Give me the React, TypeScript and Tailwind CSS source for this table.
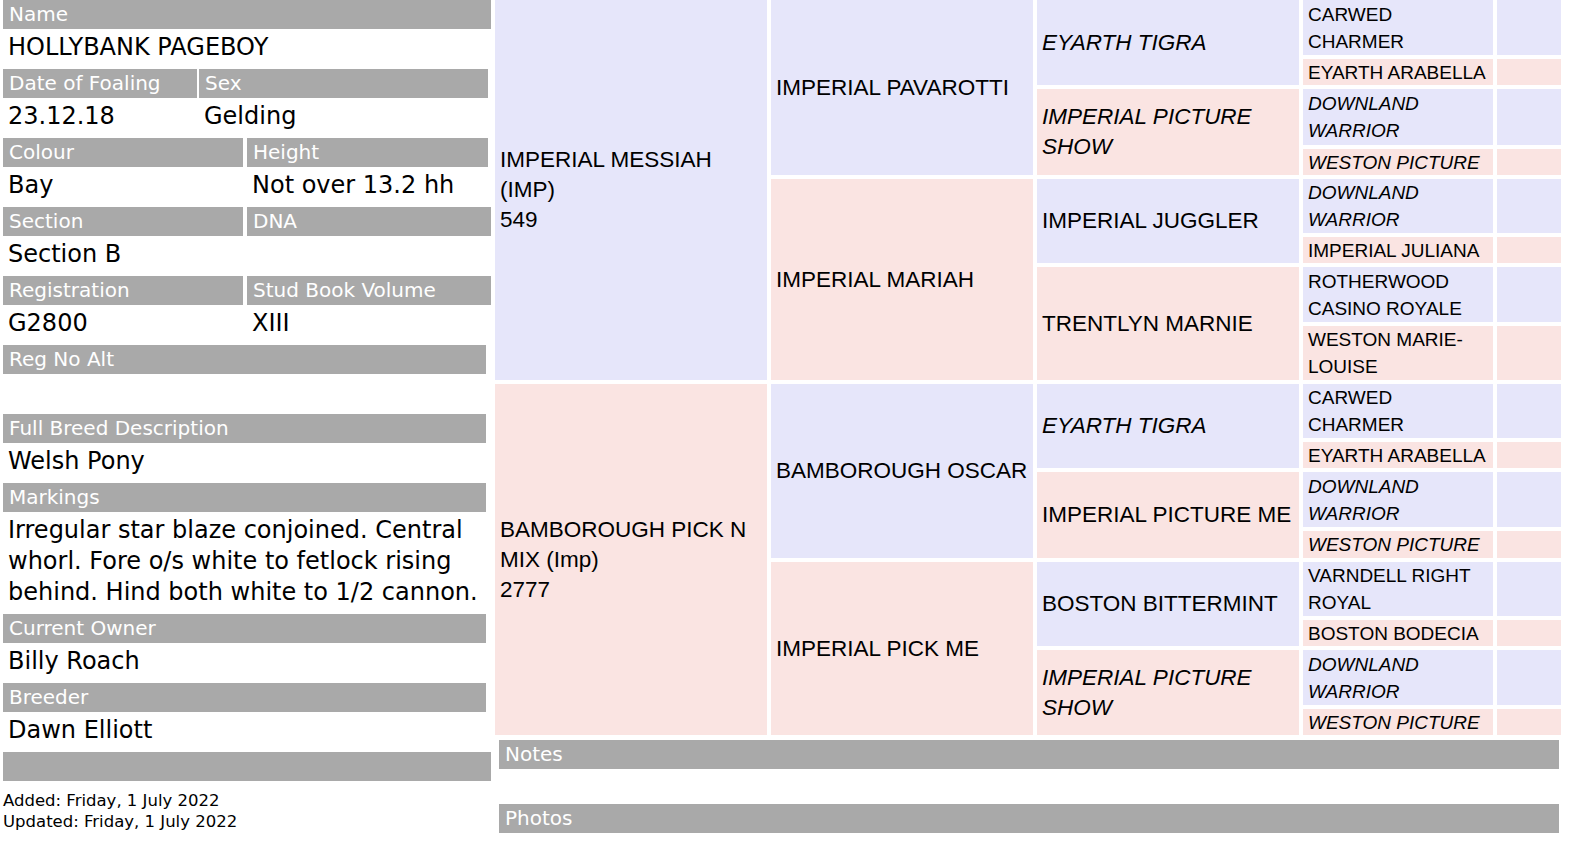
import React from 'react';

const BLUE = 'bg-[#e6e6fa]';
const PINK = 'bg-[#fae4e2]';

const Bar: React.FC<{ label?: string; className?: string }> = ({ label = '', className = '' }) => (
  <div
    className={`h-[29px] bg-[#a9a9a9] text-white text-[20px] leading-[29px] pl-[6px] whitespace-nowrap overflow-hidden ${className}`}
  >
    {label || '\u00a0'}
  </div>
);

const Value: React.FC<{ children?: React.ReactNode; className?: string }> = ({ children, className = '' }) => (
  <div className={`py-[3px] pl-[5px] leading-[31px] text-[24px] text-black whitespace-nowrap ${className}`}>
    {children ?? '\u00a0'}
  </div>
);

interface Cell {
  name: string[];
  italic?: boolean;
  pink?: boolean;
  gen: 1 | 2 | 3 | 4 | 5;
  span: number;
}

// table order, row by row (like the original rowspan table)
const cells: Cell[] = [
  { gen: 1, span: 8, name: ['IMPERIAL MESSIAH', '(IMP)', '549'] },
  { gen: 2, span: 4, name: ['IMPERIAL PAVAROTTI'] },
  { gen: 3, span: 2, name: ['EYARTH TIGRA'], italic: true },
  { gen: 4, span: 1, name: ['CARWED', 'CHARMER'] },
  { gen: 5, span: 1, name: [] },
  { gen: 4, span: 1, name: ['EYARTH ARABELLA'], pink: true },
  { gen: 5, span: 1, name: [], pink: true },
  { gen: 3, span: 2, name: ['IMPERIAL PICTURE', 'SHOW'], italic: true, pink: true },
  { gen: 4, span: 1, name: ['DOWNLAND', 'WARRIOR'], italic: true },
  { gen: 5, span: 1, name: [] },
  { gen: 4, span: 1, name: ['WESTON PICTURE'], italic: true, pink: true },
  { gen: 5, span: 1, name: [], pink: true },
  { gen: 2, span: 4, name: ['IMPERIAL MARIAH'], pink: true },
  { gen: 3, span: 2, name: ['IMPERIAL JUGGLER'] },
  { gen: 4, span: 1, name: ['DOWNLAND', 'WARRIOR'], italic: true },
  { gen: 5, span: 1, name: [] },
  { gen: 4, span: 1, name: ['IMPERIAL JULIANA'], pink: true },
  { gen: 5, span: 1, name: [], pink: true },
  { gen: 3, span: 2, name: ['TRENTLYN MARNIE'], pink: true },
  { gen: 4, span: 1, name: ['ROTHERWOOD', 'CASINO ROYALE'] },
  { gen: 5, span: 1, name: [] },
  { gen: 4, span: 1, name: ['WESTON MARIE-', 'LOUISE'], pink: true },
  { gen: 5, span: 1, name: [], pink: true },
  { gen: 1, span: 8, name: ['BAMBOROUGH PICK N', 'MIX (Imp)', '2777'], pink: true },
  { gen: 2, span: 4, name: ['BAMBOROUGH OSCAR'] },
  { gen: 3, span: 2, name: ['EYARTH TIGRA'], italic: true },
  { gen: 4, span: 1, name: ['CARWED', 'CHARMER'] },
  { gen: 5, span: 1, name: [] },
  { gen: 4, span: 1, name: ['EYARTH ARABELLA'], pink: true },
  { gen: 5, span: 1, name: [], pink: true },
  { gen: 3, span: 2, name: ['IMPERIAL PICTURE ME'], pink: true },
  { gen: 4, span: 1, name: ['DOWNLAND', 'WARRIOR'], italic: true },
  { gen: 5, span: 1, name: [] },
  { gen: 4, span: 1, name: ['WESTON PICTURE'], italic: true, pink: true },
  { gen: 5, span: 1, name: [], pink: true },
  { gen: 2, span: 4, name: ['IMPERIAL PICK ME'], pink: true },
  { gen: 3, span: 2, name: ['BOSTON BITTERMINT'] },
  { gen: 4, span: 1, name: ['VARNDELL RIGHT', 'ROYAL'] },
  { gen: 5, span: 1, name: [] },
  { gen: 4, span: 1, name: ['BOSTON BODECIA'], pink: true },
  { gen: 5, span: 1, name: [], pink: true },
  { gen: 3, span: 2, name: ['IMPERIAL PICTURE', 'SHOW'], italic: true, pink: true },
  { gen: 4, span: 1, name: ['DOWNLAND', 'WARRIOR'], italic: true },
  { gen: 5, span: 1, name: [] },
  { gen: 4, span: 1, name: ['WESTON PICTURE'], italic: true, pink: true },
  { gen: 5, span: 1, name: [], pink: true },
];

const colClass = {
  1: 'col-start-1',
  2: 'col-start-2',
  3: 'col-start-3',
  4: 'col-start-4',
  5: 'col-start-5',
};

const spanClass: Record<number, string> = {
  1: 'row-span-1',
  2: 'row-span-2',
  4: 'row-span-4',
  8: 'row-span-8',
};

const PedigreeCell: React.FC<{ cell: Cell }> = ({ cell }) => {
  const text =
    cell.gen === 4 ? 'text-[19px] leading-[27px]' : 'text-[22.5px] leading-[30px]';
  return (
    <div
      className={`${colClass[cell.gen]} ${spanClass[cell.span]} ${cell.pink ? PINK : BLUE} flex flex-col justify-center pl-[5px] whitespace-nowrap ${text} ${cell.italic ? 'italic' : ''} text-black`}
    >
      {cell.name.map((n, i) => (
        <div key={i}>{n}</div>
      ))}
    </div>
  );
};

export default function App() {
  return (
    <div className="flex bg-white w-[1572px] h-[842px] overflow-hidden font-['DejaVu_Sans',Verdana,sans-serif]">
      {/* left: horse details */}
      <div className="w-[488px] ml-[3px] shrink-0 flex flex-col">
        <Bar label="Name" />
        <Value className="mb-[3px]">HOLLYBANK PAGEBOY</Value>

        <div className="flex gap-[2px] w-[485px]">
          <Bar label="Date of Foaling" className="w-[194px]" />
          <Bar label="Sex" className="flex-1" />
        </div>
        <div className="flex mb-[3px]">
          <Value className="w-[196px]">23.12.18</Value>
          <Value>Gelding</Value>
        </div>

        <div className="flex gap-[4px] w-[485px]">
          <Bar label="Colour" className="w-[240px]" />
          <Bar label="Height" className="flex-1" />
        </div>
        <div className="flex mb-[3px]">
          <Value className="w-[244px]">Bay</Value>
          <Value>Not over 13.2 hh</Value>
        </div>

        <div className="flex gap-[4px]">
          <Bar label="Section" className="w-[240px]" />
          <Bar label="DNA" className="flex-1" />
        </div>
        <div className="flex mb-[3px]">
          <Value className="w-[244px]">Section B</Value>
          <Value />
        </div>

        <div className="flex gap-[4px]">
          <Bar label="Registration" className="w-[240px]" />
          <Bar label="Stud Book Volume" className="flex-1" />
        </div>
        <div className="flex mb-[3px]">
          <Value className="w-[244px]">G2800</Value>
          <Value>XIII</Value>
        </div>

        <Bar label="Reg No Alt" className="w-[483px]" />
        <Value className="mb-[3px]" />

        <Bar label="Full Breed Description" className="w-[483px]" />
        <Value className="mb-[3px]">Welsh Pony</Value>

        <Bar label="Markings" className="w-[483px]" />
        <Value className="mb-[3px]">
          <div>Irregular star blaze conjoined. Central</div>
          <div>whorl. Fore o/s white to fetlock rising</div>
          <div>behind. Hind both white to 1/2 cannon.</div>
        </Value>

        <Bar label="Current Owner" className="w-[483px]" />
        <Value className="mb-[3px]">Billy Roach</Value>

        <Bar label="Breeder" className="w-[483px]" />
        <Value className="mb-[3px]">Dawn Elliott</Value>

        <Bar />
        <div className="mt-[9px] text-[16.5px] leading-[21px] text-black">
          <div>Added: Friday, 1 July 2022</div>
          <div>Updated: Friday, 1 July 2022</div>
        </div>
      </div>

      {/* right: pedigree */}
      <div className="ml-[4px] flex flex-col">
        <div className="grid grid-cols-[272px_262px_262px_190px_64px] grid-rows-[55px_26px_56px_26px_54px_26px_55px_54px_54px_26px_55px_27px_54px_26px_55px_26px] gap-[4px] font-['Liberation_Sans',Arial,sans-serif]">
          {cells.map((c, i) => (
            <PedigreeCell key={i} cell={c} />
          ))}
        </div>
        <Bar label="Notes" className="ml-[4px] mt-[5px] w-[1060px]" />
        <div className="h-[35px]" />
        <Bar label="Photos" className="ml-[4px] w-[1060px]" />
      </div>
    </div>
  );
}
